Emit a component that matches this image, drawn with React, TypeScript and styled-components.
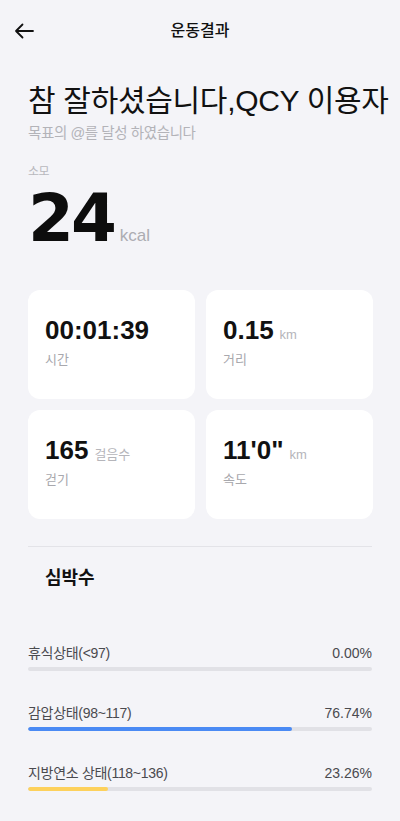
import React from "react";
import styled, { createGlobalStyle } from "styled-components";

const GlobalStyle = createGlobalStyle`
  html, body { margin: 0; padding: 0; background: #f4f4f8; }
  body {
    font-family: "Liberation Sans", "Noto Sans CJK KR", sans-serif;
    color: #111;
    -webkit-font-smoothing: antialiased;
  }
  * { box-sizing: border-box; }
`;

const Page = styled.div`
  width: 400px;
  min-height: 821px;
  background: #f4f4f8;
  padding-bottom: 30px;
`;

const Header = styled.header`
  height: 62px;
  display: grid;
  grid-template-columns: 1fr auto 1fr;
  align-items: center;
  padding: 0 12px;
`;

const BackButton = styled.button`
  justify-self: start;
  background: none;
  border: 0;
  padding: 0;
  width: 24px;
  height: 24px;
  display: flex;
  align-items: center;
  justify-content: center;
  color: #111;
`;

const Title = styled.h1`
  margin: 0;
  font-size: 16px;
  font-weight: 500;
  line-height: 22px;
  color: #111;
`;

const Content = styled.main`
  padding: 0 27px 0 28px;
`;

const Heading = styled.h2`
  margin: 21px 0 0;
  font-size: 30px;
  font-weight: 400;
  line-height: 36px;
  letter-spacing: -0.3px;
  white-space: nowrap;
  color: #111;
`;

const Subtitle = styled.p`
  margin: 4px 0 0;
  font-size: 14.5px;
  line-height: 20px;
  color: #b3b3b8;
  letter-spacing: -0.4px;
`;

const StatLabel = styled.div`
  margin-top: 21px;
  font-size: 12px;
  line-height: 16px;
  color: #b8b8bd;
  letter-spacing: -0.5px;
`;

const CalorieRow = styled.div`
  margin-top: 6px;
  display: flex;
  align-items: baseline;
  height: 66px;
`;

const CalorieValue = styled.span`
  font-family: "DejaVu Sans", sans-serif;
  font-weight: 700;
  font-size: 66px;
  line-height: 66px;
  letter-spacing: -3px;
  color: #0d0d0d;
`;

const CalorieUnit = styled.span`
  margin-left: 6px;
  font-size: 17px;
  color: #acacb2;
`;

const CardGrid = styled.section`
  margin-top: 38px;
  display: grid;
  grid-template-columns: 1fr 1fr;
  gap: 11px;
`;

const Card = styled.div`
  height: 109px;
  background: #fff;
  border-radius: 12px;
  padding: 24px 12px 0 17px;
`;

const ValueRow = styled.div`
  display: flex;
  align-items: baseline;
`;

const Value = styled.span`
  font-size: 26px;
  font-weight: 700;
  line-height: 32px;
  color: #111;
`;

const Unit = styled.span`
  margin-left: 6px;
  font-size: 13px;
  color: #b5b5ba;
`;

const CardLabel = styled.div`
  margin-top: 4px;
  font-size: 13px;
  line-height: 20px;
  color: #a8a8ad;
`;

const Divider = styled.hr`
  margin: 27px 1px 0 0;
  border: 0;
  height: 1px;
  background: #e3e3e8;
`;

const SectionTitle = styled.h3`
  margin: 18px 0 0;
  padding-left: 17px;
  font-size: 18px;
  font-weight: 600;
  line-height: 26px;
  color: #111;
`;

const ZoneList = styled.div`
  margin-top: 52px;
  display: flex;
  flex-direction: column;
  gap: 32px;
`;

const Zone = styled.div`
  display: flex;
  flex-direction: column;
`;

const ZoneHead = styled.div`
  display: flex;
  justify-content: space-between;
  align-items: center;
  font-size: 14px;
  line-height: 20px;
  color: #4a4a4f;
`;

const ZoneName = styled.span`
  letter-spacing: -0.3px;
`;

const ZonePercent = styled.span`
  margin-right: 1px;
`;

const Track = styled.div`
  margin: 4px 1px 0 0;
  height: 4px;
  border-radius: 2px;
  background: #e1e1e6;
  overflow: hidden;
`;

const Fill = styled.div<{ $color: string }>`
  height: 100%;
  border-radius: 2px;
  background: ${(p) => p.$color};
`;

const stats = [
  { value: "00:01:39", unit: "", label: "시간" },
  { value: "0.15", unit: "km", label: "거리" },
  { value: "165", unit: "걸음수", label: "걷기" },
  { value: "11'0\"", unit: "km", label: "속도" },
];

const zones = [
  { name: "휴식상태(<97)", pct: 0, text: "0.00%", color: "#4a8af4" },
  { name: "감압상태(98~117)", pct: 76.74, text: "76.74%", color: "#4a8af4" },
  { name: "지방연소 상태(118~136)", pct: 23.26, text: "23.26%", color: "#fdd15c" },
];

export default function App() {
  return (
    <Page>
      <GlobalStyle />
      <Header>
        <BackButton aria-label="back">
          <svg width="20" height="16" viewBox="0 0 20 16" fill="none">
            <path
              d="M19 8H2M8.5 1.5L2 8l6.5 6.5"
              stroke="#111"
              strokeWidth="1.8"
              strokeLinecap="round"
              strokeLinejoin="round"
            />
          </svg>
        </BackButton>
        <Title>운동결과</Title>
        <span />
      </Header>
      <Content>
        <Heading>참 잘하셨습니다,QCY 이용자</Heading>
        <Subtitle>목표의 @를 달성 하였습니다</Subtitle>
        <StatLabel>소모</StatLabel>
        <CalorieRow>
          <CalorieValue>24</CalorieValue>
          <CalorieUnit>kcal</CalorieUnit>
        </CalorieRow>
        <CardGrid>
          {stats.map((s) => (
            <Card key={s.label}>
              <ValueRow>
                <Value>{s.value}</Value>
                {s.unit && <Unit>{s.unit}</Unit>}
              </ValueRow>
              <CardLabel>{s.label}</CardLabel>
            </Card>
          ))}
        </CardGrid>
        <Divider />
        <SectionTitle>심박수</SectionTitle>
        <ZoneList>
          {zones.map((z) => (
            <Zone key={z.name}>
              <ZoneHead>
                <ZoneName>{z.name}</ZoneName>
                <ZonePercent>{z.text}</ZonePercent>
              </ZoneHead>
              <Track>
                <Fill $color={z.color} style={{ width: `${z.pct}%` }} />
              </Track>
            </Zone>
          ))}
        </ZoneList>
      </Content>
    </Page>
  );
}
